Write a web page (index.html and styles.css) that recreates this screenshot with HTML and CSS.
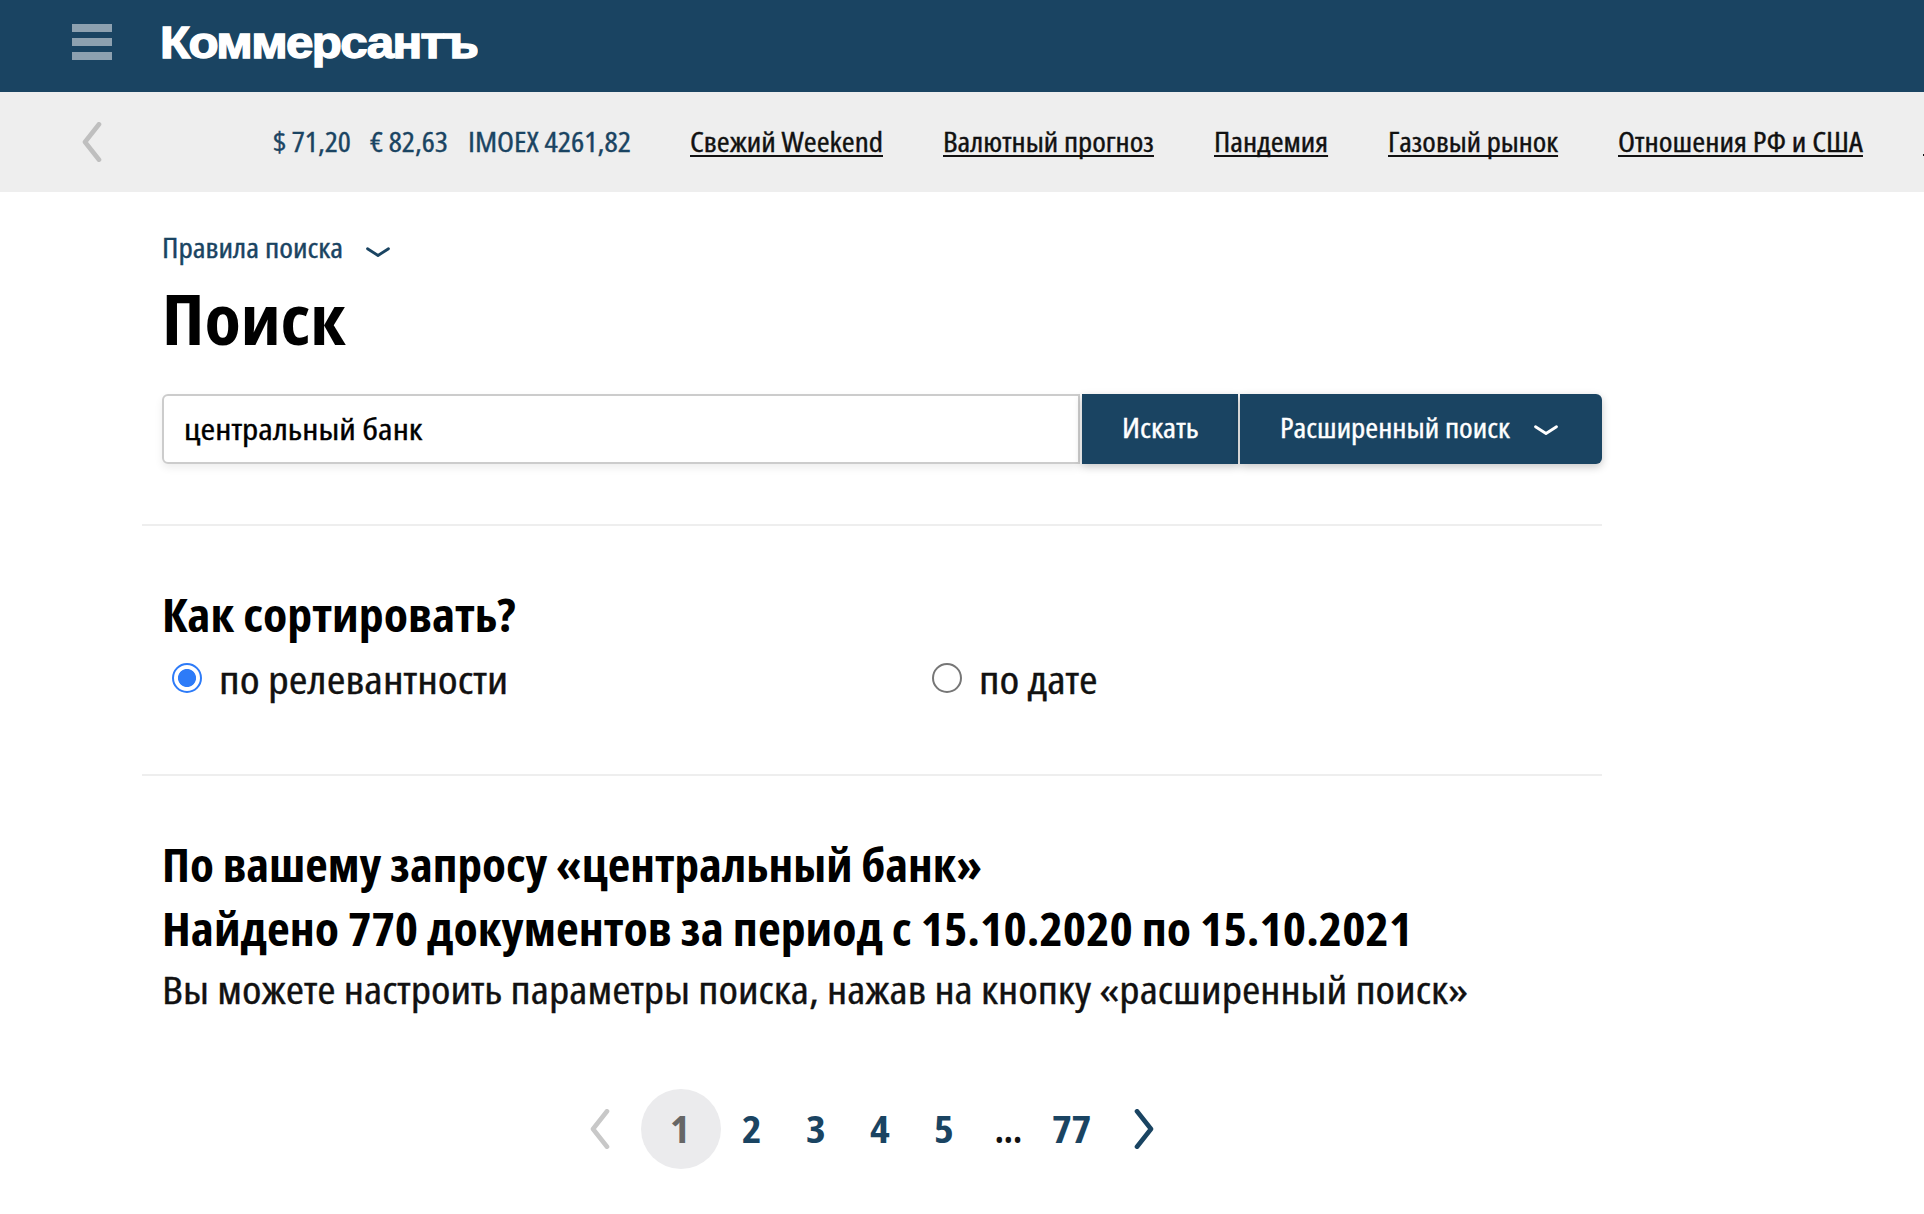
FILE: index.html
```html
<!DOCTYPE html>
<html lang="ru">
<head>
<meta charset="utf-8">
<title>Поиск — Коммерсантъ</title>
<link rel="stylesheet" href="styles.css">
</head>
<body>
<header class="header">
  <button class="menu" aria-label="Меню"><i></i><i></i><i></i></button>
  <a class="logo"><span>Коммерсантъ</span></a>
</header>

<nav class="topics">
  <svg class="arrow topics-prev" viewBox="0 0 20 40"><path d="M17 2.300 3 20l14 17.700"/></svg>
  <div class="ticker">
    <span class="fit usd"><span>$ 71,20</span></span>
    <span class="fit eur"><span>€ 82,63</span></span>
    <span class="fit imoex"><span>IMOEX 4261,82</span></span>
  </div>
  <div class="links">
    <a class="fit l1"><span>Свежий Weekend</span></a>
    <a class="fit l2"><span>Валютный прогноз</span></a>
    <a class="fit l3"><span>Пандемия</span></a>
    <a class="fit l4"><span>Газовый рынок</span></a>
    <a class="fit l5"><span>Отношения РФ и США</span></a>
    <a class="next-topic"></a>
  </div>
</nav>

<main class="page">
  <section class="search">
    <div class="rules">
      <span class="fit rules-text"><span>Правила поиска</span></span>
      <svg class="chevron" viewBox="0 0 24 11"><path d="M1.500 1.700 12 8.500l10.500-6.800"/></svg>
    </div>
    <h1 class="fit"><span>Поиск</span></h1>
    <div class="search-row">
      <div class="field"><span class="fit query"><span>центральный банк</span></span></div>
      <button class="btn btn-find"><span class="fit find-text"><span>Искать</span></span></button>
      <button class="btn btn-more">
        <span class="fit more-text"><span>Расширенный поиск</span></span>
        <svg class="chevron" viewBox="0 0 24 11"><path d="M1.500 1.700 12 8.500l10.500-6.800"/></svg>
      </button>
    </div>
  </section>

  <section class="sort">
    <h2 class="fit sort-title"><span>Как сортировать?</span></h2>
    <div class="options">
      <label class="option"><i class="radio checked"></i><span class="fit o1"><span>по релевантности</span></span></label>
      <label class="option"><i class="radio"></i><span class="fit o2"><span>по дате</span></span></label>
    </div>
  </section>

  <section class="results">
    <h2 class="fit r1"><span>По вашему запросу «центральный банк»</span></h2>
    <h2 class="fit r2"><span>Найдено 770 документов за период с 15.10.2020 по 15.10.2021</span></h2>
    <p class="fit r3"><span>Вы можете настроить параметры поиска, нажав на кнопку «расширенный поиск»</span></p>
  </section>

  <nav class="pager">
    <svg class="arrow" viewBox="0 0 20 40"><path d="M17 2.300 3 20l14 17.700"/></svg>
    <a class="current"><span>1</span></a>
    <a><span>2</span></a>
    <a><span>3</span></a>
    <a><span>4</span></a>
    <a><span>5</span></a>
    <a class="dots"><span>...</span></a>
    <a class="last"><span>77</span></a>
    <svg class="arrow next" viewBox="0 0 20 40"><path d="M3 2.300 17 20 3 37.700"/></svg>
  </nav>
</main>
</body>
</html>
```
FILE: styles.css
```css
* { box-sizing: border-box; }
body {
  margin: 0;
  background: #fff;
  color: #111;
  font-family: "Open Sans", "Noto Sans", sans-serif;
  font-stretch: 75%;
  overflow: hidden;
}
h1, h2, p { margin: 0; }
button { border: 0; padding: 0; font: inherit; font-stretch: 75%; }
svg { display: block; flex: none; fill: none; stroke-linecap: round; stroke-linejoin: round; }

/* Condensed face widened to semi-condensed proportions */
.fit { display: block; flex: none; white-space: nowrap; -webkit-text-stroke: .35px currentColor; }
h1.fit, h2.fit { -webkit-text-stroke: 0; }
.fit > span { display: inline-block; transform: scaleX(var(--sx, 1.17)); transform-origin: 0 50%; }

.header { display: flex; height: 92px; padding: 0 72px; background: #1a4462; }
.menu { display: flex; flex-direction: column; gap: 6px; width: 40px; margin-top: 24px; background: none; }
.menu i { height: 8px; background: #8da1b0; }
.logo { margin-left: 48px; padding-top: 17px; }
.logo span {
  display: inline-block;
  color: #fff;
  font: 700 45px/52px "Liberation Sans", Arial, sans-serif;
  letter-spacing: -1.5px;
  -webkit-text-stroke: 1.4px #fff;
  transform: scaleX(1.096);
  transform-origin: 0 50%;
}

.topics { display: flex; align-items: center; height: 100px; padding-left: 82px; background: #eee; font-size: 26.5px; line-height: 40px; }
.arrow { width: 20px; height: 40px; stroke: #c8c8c8; stroke-width: 4.600; }
.topics-prev { margin-right: 171px; stroke: #bfbfbf; }
.ticker { display: flex; color: #1a4462; }
.usd { width: 97px; --sx: 1.16; }
.eur { width: 98px; --sx: 1.16; }
.imoex { width: 162px; --sx: 1.176; }
.links { display: flex; gap: 60px; margin-left: 60px; }
.links span { text-decoration: underline; text-decoration-thickness: 2px; text-underline-offset: 2.500px; text-decoration-skip-ink: none; }
.l1 { width: 193px; --sx: 1.177; }
.l2 { width: 211px; --sx: 1.168; }
.l3 { width: 114px; --sx: 1.172; }
.l4 { width: 170px; --sx: 1.159; }
.l5 { width: 245px; --sx: 1.181; }
.next-topic { width: 120px; height: 34px; border-bottom: 2px solid #111; }

.page { width: 1460px; margin-left: 142px; }
.search { height: 334px; padding: 36px 0 0 20px; border-bottom: 2px solid #eee; }
.rules { display: flex; align-items: center; color: #1a4462; font-size: 26.5px; line-height: 40px; }
.rules-text { width: 204px; --sx: 1.18; }
.chevron { width: 24px; height: 11px; margin-top: 8px; stroke: currentColor; stroke-width: 2.800; }
h1 { margin-top: 10px; color: #000; font-size: 69px; line-height: 80px; --sx: 1.08; }

.search-row { display: flex; gap: 2px; height: 70px; margin-top: 36px; }
.field {
  width: 918px;
  padding-left: 20px;
  border: 2px solid #ccc;
  border-radius: 6px 0 0 6px;
  box-shadow: 0 4px 8px rgba(0, 0, 0, .07);
  color: #000;
  font-size: 29px;
  line-height: 66px;
}
.query { --sx: 1.224; }
.btn { display: flex; align-items: center; background: #1a4462; color: #fff; font-size: 26.5px; line-height: 66px; box-shadow: 0 3px 8px rgba(0, 0, 0, .22); }
.btn .fit { margin-top: -3px; text-align: left; }
.btn-find { width: 156px; padding-left: 40px; }
.find-text { --sx: 1.2; }
.btn-more { width: 362px; padding-left: 40px; border-radius: 0 6px 6px 0; }
.more-text { width: 254px; --sx: 1.173; }
.btn .chevron { margin-top: 3px; }

h2 { color: #000; font-size: 46px; }
.sort { height: 250px; padding: 58px 0 0 20px; border-bottom: 2px solid #eee; }
.sort-title { line-height: 60px; --sx: 1.083; }
.options { display: flex; margin-top: 5px; font-size: 37.5px; line-height: 60px; }
.option { display: flex; flex: none; align-items: center; width: 760px; padding-left: 10px; }
.option .fit { position: relative; top: 1px; }
.radio { flex: none; width: 30px; height: 30px; margin: -2px 17px 0 0; border: 2px solid #767676; border-radius: 50%; }
.checked { border-color: #2d7bf8; background: radial-gradient(circle, #2d7bf8 8.600px, #fff 9.400px); }
.o1 { --sx: 1.21; }
.o2 { --sx: 1.2; }

.results { padding: 56px 0 0 20px; }
.results h2 { line-height: 64px; }
.r1 { --sx: 1.067; }
.r2 { --sx: 1.082; }
.r3 { font-size: 38px; line-height: 58px; --sx: 1.166; }

.pager { display: flex; align-items: center; height: 80px; margin: 71px 0 0 448px; color: #1a4462; font-size: 37.500px; font-weight: 700; line-height: 80px; }
.pager a { width: 64px; text-align: center; }
.pager a span { display: inline-block; transform: scaleX(1.12); }
.pager .current { width: 80px; margin: 0 -1px 0 31px; padding-right: 2px; border-radius: 50%; background: #ebebed; color: #666; }
.pager .dots { color: #111; }
.pager .dots span { transform: scaleX(.95); }
.pager .last { margin-right: 30px; }
.pager .next { stroke: #1a4462; }
```
